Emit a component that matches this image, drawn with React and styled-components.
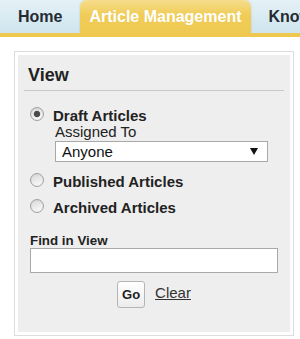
import styled, { createGlobalStyle } from "styled-components";

const GlobalStyle = createGlobalStyle`
  html, body {
    margin: 0;
    padding: 0;
    background: #fff;
    overflow: hidden;
  }
  body {
    font-family: "Liberation Sans", Arial, sans-serif;
    color: #222;
  }
`;

const tabs = [
  { label: "Home" },
  { label: "Article Management", active: true },
  { label: "Knowledge" },
];

const views = [
  { label: "Draft Articles", checked: true, assign: true },
  { label: "Published Articles" },
  { label: "Archived Articles" },
];

const App = () => {
  return (
    <>
      <GlobalStyle />
      <TabBar>
        {tabs.map((t) => (
          <Tab key={t.label} $active={t.active}>
            {t.label}
          </Tab>
        ))}
      </TabBar>

      <Panel>
        <PanelBody>
          <Header>View</Header>
          <Content>
            <Options>
              {views.map((v) => (
                <Option key={v.label}>
                  <RadioRow>
                    <Radio $checked={v.checked} />
                    <OptionLabel>{v.label}</OptionLabel>
                  </RadioRow>
                  {v.assign && (
                    <Assign>
                      <AssignLabel>Assigned To</AssignLabel>
                      <Select>
                        <span>Anyone</span>
                        <Arrow />
                      </Select>
                    </Assign>
                  )}
                </Option>
              ))}
            </Options>

            <FindLabel>Find in View</FindLabel>
            <SearchInput type="text" />

            <Actions>
              <GoButton type="button">Go</GoButton>
              <ClearLink href="#">Clear</ClearLink>
            </Actions>
          </Content>
        </PanelBody>
      </Panel>
    </>
  );
};

const TabBar = styled.div`
  display: flex;
  align-items: flex-end;
  gap: 9px;
  height: 33px;
  padding-left: 9px;
  white-space: nowrap;
  overflow: hidden;
  background: linear-gradient(#e4f1f6, #cfe5ee);
  border-bottom: 4px solid #efc94f;
`;

const Tab = styled.div`
  height: 33px;
  line-height: 33px;
  padding: 0 9px;
  font-size: 16px;
  font-weight: bold;
  border-radius: 7px 7px 0 0;
  color: ${({ $active }) => ($active ? "#fff" : "#262a33")};
  background: ${({ $active }) =>
    $active ? "linear-gradient(#f6dd8c, #f0cc58 45%, #efca52)" : "transparent"};
  box-shadow: ${({ $active }) =>
    $active ? "0 0 2px rgba(120, 100, 40, 0.25)" : "none"};
`;

const Panel = styled.div`
  margin: 14px 6px 0 14px;
  border: 1px solid #dddddd;
  padding: 3px;
  background: #fff;
`;

const PanelBody = styled.div`
  background: #eeeeee;
  height: 277px;
`;

const Header = styled.div`
  margin: 0 6px;
  padding: 9px 4px 4px;
  font-size: 18px;
  line-height: 22px;
  font-weight: bold;
  color: #222;
  border-bottom: 1px solid #c8c8c8;
`;

const Content = styled.div`
  padding: 17px 12px 0;
`;

const Options = styled.div`
  display: flex;
  flex-direction: column;
  gap: 10px;
`;

const Option = styled.div`
  display: flex;
  flex-direction: column;
`;

const RadioRow = styled.div`
  display: flex;
  align-items: flex-start;
  gap: 9px;
`;

const Radio = styled.span`
  flex: none;
  box-sizing: border-box;
  width: 14px;
  height: 14px;
  margin-top: -1px;
  border-radius: 50%;
  border: 1px solid #a2a2a2;
  background: ${({ $checked }) =>
      $checked
        ? "radial-gradient(circle, #4a4a4a 0 2.6px, #7a7a7a 3.2px, transparent 3.6px),"
        : ""}
    linear-gradient(160deg, #d6d6d6, #f2f2f2 70%, #fafafa);
  box-shadow: inset 0 0 1px rgba(0, 0, 0, 0.15);
`;

const OptionLabel = styled.span`
  font-size: 15px;
  line-height: 16px;
  font-weight: bold;
  color: #222;
`;

const Assign = styled.div`
  padding: 0 0 2px 25px;
`;

const AssignLabel = styled.div`
  font-size: 15px;
  line-height: 16px;
  color: #222;
`;

const Select = styled.div`
  box-sizing: border-box;
  display: flex;
  align-items: center;
  justify-content: space-between;
  width: 213px;
  height: 21px;
  margin-top: 1px;
  padding: 0 9px 0 6px;
  background: #fff;
  border: 1px solid #a9a9a9;
  font-size: 15px;
  color: #111;
`;

const Arrow = styled.span`
  width: 0;
  height: 0;
  border-left: 4px solid transparent;
  border-right: 4px solid transparent;
  border-top: 7px solid #111;
`;

const FindLabel = styled.div`
  margin-top: 17px;
  font-size: 13.33px;
  line-height: 15px;
  font-weight: bold;
  color: #222;
`;

const SearchInput = styled.input`
  display: block;
  box-sizing: border-box;
  width: 100%;
  height: 25px;
  margin: 0;
  border: 1px solid #a9a9a9;
  background: #fff;
  font-family: inherit;
  font-size: 14px;
  outline: none;
`;

const Actions = styled.div`
  display: flex;
  align-items: center;
  justify-content: center;
  gap: 10px;
  margin-top: 8px;
`;

const GoButton = styled.button`
  box-sizing: border-box;
  width: 28px;
  height: 27px;
  padding: 0;
  border: 1px solid #b5b5b5;
  border-radius: 3px;
  background: linear-gradient(#ffffff, #ececec);
  font-family: inherit;
  font-size: 13px;
  font-weight: bold;
  color: #222;
`;

const ClearLink = styled.a`
  font-size: 15px;
  color: #333;
  text-decoration: underline;
  margin-top: -4px;
`;

export default App;
